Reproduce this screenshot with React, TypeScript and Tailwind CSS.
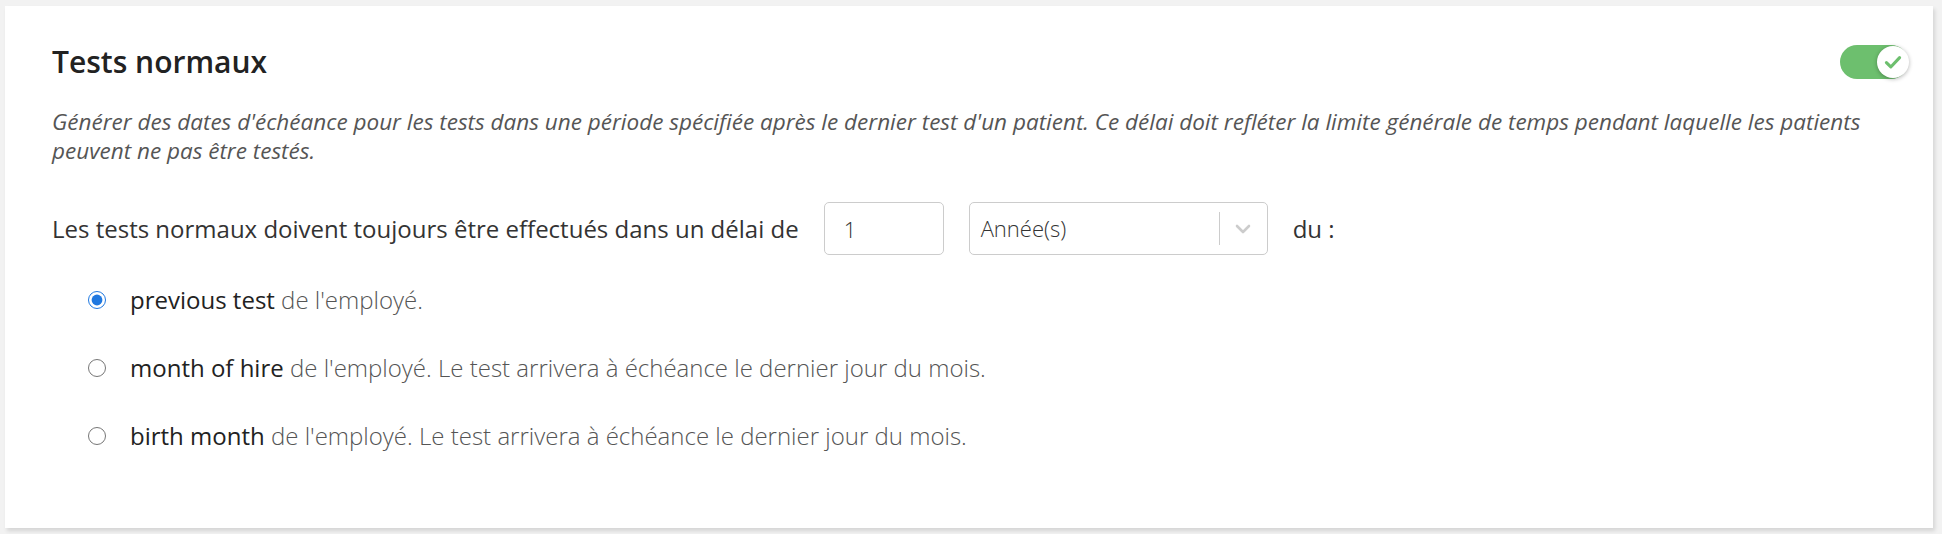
import { useState } from "react";

const options = [
  { id: "previous", label: "previous test", rest: "de l'employé." },
  { id: "hire", label: "month of hire", rest: "de l'employé. Le test arrivera à échéance le dernier jour du mois." },
  { id: "birth", label: "birth month", rest: "de l'employé. Le test arrivera à échéance le dernier jour du mois." },
];

export default function App() {
  const [choice, setChoice] = useState("previous");
  const [enabled, setEnabled] = useState(true);

  return (
    <div className="min-h-screen bg-[#f2f2f2] pt-[6px] pl-[5px] font-['Open_Sans',sans-serif]">
      <div className="w-[1928px] h-[522px] bg-white shadow-[2px_3px_4px_rgba(0,0,0,0.12)] pl-[47px] pr-[25px] pt-[38px]">
        {/* Header */}
        <div className="flex items-center justify-between">
          <h2 className="text-[30px] leading-[36px] font-semibold text-[#222]">Tests normaux</h2>
          <button
            onClick={() => setEnabled(!enabled)}
            className={`relative w-[68px] h-[34px] rounded-full ${enabled ? "bg-[#6dbf6e]" : "bg-gray-300"}`}
          >
            <span className="absolute right-[-1px] top-[1px] w-[32px] h-[32px] rounded-full bg-white shadow-[0_1px_4px_rgba(0,0,0,0.3)] flex items-center justify-center">
              <svg width="22" height="22" viewBox="0 0 20 20" fill="none">
                <path d="M4 10.5l4 4 8-8.5" stroke="#6dbf6e" strokeWidth="2.8" strokeLinecap="round" strokeLinejoin="round" />
              </svg>
            </span>
          </button>
        </div>

        <p className="mt-[27px] text-[22.5px] leading-[29px] italic text-[#555]">
          Générer des dates d'échéance pour les tests dans une période spécifiée après le dernier test d'un patient. Ce délai doit refléter la limite générale de temps pendant laquelle les patients peuvent ne pas être testés.
        </p>

        {/* Delay row */}
        <div className="mt-[37px] flex items-center gap-[25px] text-[24px] text-[#333]">
          <span>Les tests normaux doivent toujours être effectués dans un délai de</span>
          <input
            defaultValue="1"
            className="w-[120px] h-[53px] rounded-[5px] border border-[#ccc] px-[19px] text-[22px] font-light text-[#333] outline-none"
          />
          <div className="w-[299px] h-[53px] rounded-[5px] border border-[#ccc] flex items-center">
            <span className="flex-1 pl-[11px] text-[22px] font-light text-[#333]">Année(s)</span>
            <span className="w-px h-[33px] bg-[#ccc]" />
            <span className="w-[47px] flex items-center justify-center">
              <svg width="16" height="10" viewBox="0 0 16 10" fill="none">
                <path d="M2 2l6 6 6-6" stroke="#ccc" strokeWidth="2.6" strokeLinecap="round" strokeLinejoin="round" />
              </svg>
            </span>
          </div>
          <span>du :</span>
        </div>

        {/* Radios */}
        <div className="mt-[28px] pl-[36px] flex flex-col gap-[34px]">
          {options.map((o) => (
            <label key={o.id} className="flex items-center h-[34px] text-[24px] text-[#333] cursor-pointer">
              <input
                type="radio"
                name="base"
                checked={choice === o.id}
                onChange={() => setChoice(o.id)}
                className="w-[18px] h-[18px] m-0 accent-[#1f78e0]"
              />
              <span className="ml-[24px]">
                <span className="font-normal text-[#222]">{o.label}</span>{" "}
                <span className="font-light text-[#555]">{o.rest}</span>
              </span>
            </label>
          ))}
        </div>
      </div>
    </div>
  );
}
